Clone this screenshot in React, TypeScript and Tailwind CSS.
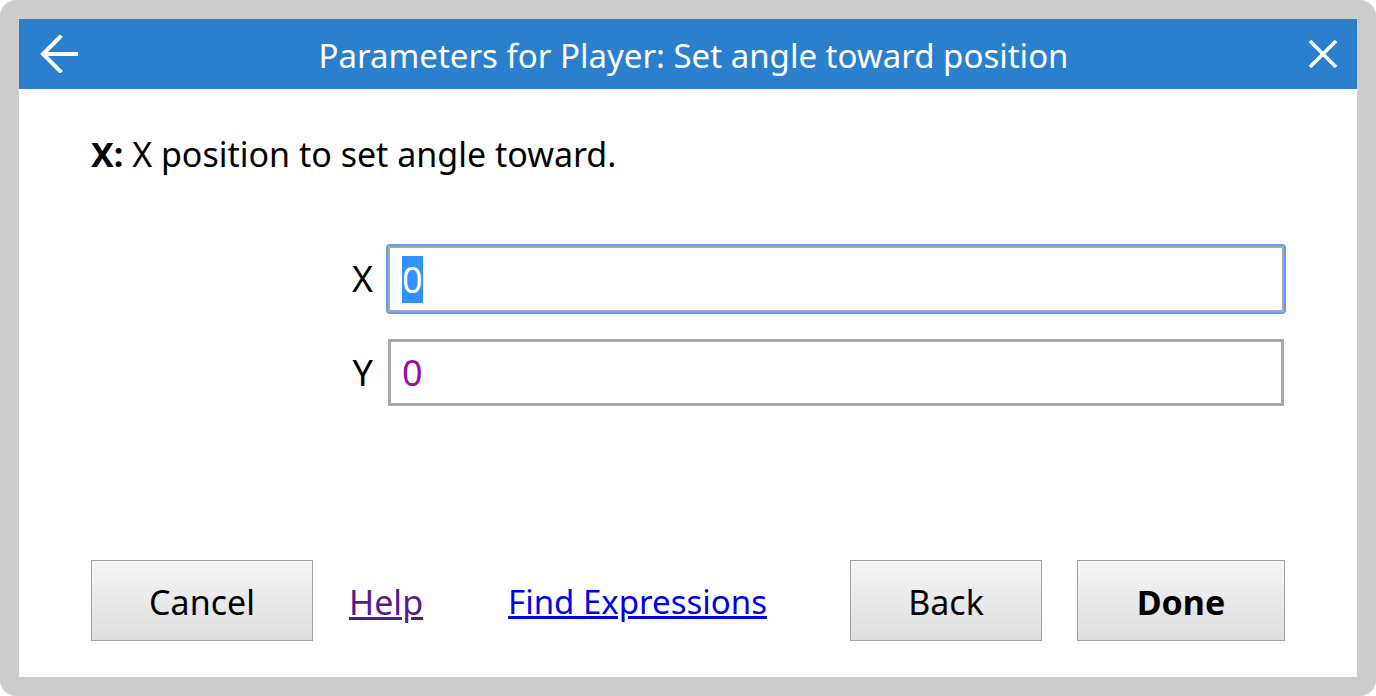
import React from "react"

const font = { fontFamily: '"Noto Sans", "Open Sans", sans-serif' }

function BackArrow() {
  return (
    <svg viewBox="0 0 38 38" className="h-[38px] w-[38px]" fill="none" stroke="white" strokeWidth="4">
      <path d="M20 2 L3 19 L20 36" strokeLinecap="square" />
      <path d="M4 19 H38" />
    </svg>
  )
}

function CloseIcon() {
  return (
    <svg viewBox="0 0 28 28" className="h-[28px] w-[28px]" fill="none" stroke="white" strokeWidth="3.5">
      <path d="M1 1 L27 27 M27 1 L1 27" />
    </svg>
  )
}

function Button({ label, width, bold }: { label: string; width: string; bold?: boolean }) {
  return (
    <button
      type="button"
      className={`${width} h-[81px] border border-[#a3a3a3] bg-gradient-to-b from-[#f6f6f6] to-[#dddddd] pt-[3px] text-[34px] text-black ${bold ? "font-bold" : ""}`}
    >
      {label}
    </button>
  )
}

export default function App() {
  return (
    <div className="h-screen w-full bg-white" style={font}>
      <div className="h-full w-full rounded-[16px] bg-[#cccccc] p-[19px]">
        <div className="flex h-full flex-col bg-white">
          <div className="flex h-[70px] items-center bg-[#2b80cd] pl-[21px] pr-[20px]">
            <BackArrow />
            <div className="flex-1 pt-[2px] text-center text-[33px] leading-none text-white">
              Parameters for Player: Set angle toward position
            </div>
            <CloseIcon />
          </div>

          <div className="flex flex-1 flex-col px-[72px] pt-[40px] pb-[36px]">
            <p className="text-[34px] leading-[51px] text-black">
              <span className="font-bold">X:</span> X position to set angle toward.
            </p>

            <div className="mt-[66px] flex flex-col items-end gap-[27px] pr-[1px]">
              <div className="flex items-center gap-[15px]">
                <span className="text-[36px] text-black">X</span>
                <div className="flex h-[66px] w-[896px] items-center rounded-[2px] border-2 border-[#a6a6a6] px-[12px] outline-2 outline-[#5c9ef9]">
                  <span className="bg-[#3390ff] text-[36px] leading-[47px] text-white">0</span>
                </div>
              </div>
              <div className="flex items-center gap-[15px]">
                <span className="text-[36px] text-black">Y</span>
                <div className="flex h-[67px] w-[896px] items-center border-[3px] border-[#a9a9a9] px-[11px]">
                  <span className="text-[36px] text-[#9c0ca0]">0</span>
                </div>
              </div>
            </div>

            <div className="mt-auto flex items-center">
              <Button label="Cancel" width="w-[222px]" />
              <a className="ml-[36px] pt-[3px] text-[34px] text-[#551a8b] underline" href="#">
                Help
              </a>
              <a className="ml-[85px] pt-[3px] text-[33px] text-[#0000ee] underline" href="#">
                Find Expressions
              </a>
              <div className="flex-1" />
              <Button label="Back" width="w-[192px]" />
              <div className="w-[35px]" />
              <Button label="Done" width="w-[208px]" bold />
            </div>
          </div>
        </div>
      </div>
    </div>
  )
}
